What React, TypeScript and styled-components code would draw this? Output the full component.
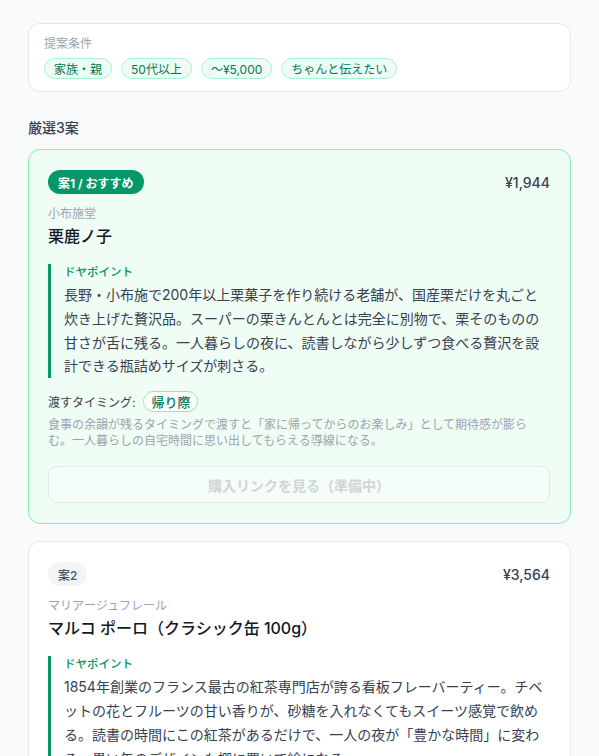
import React from 'react'
import styled, { createGlobalStyle } from 'styled-components'

const GlobalStyle = createGlobalStyle`
  * { box-sizing: border-box; }
  body {
    margin: 0;
    background: #f9fafb;
    font-family: Inter, "Noto Sans CJK JP", sans-serif;
    color: #111827;
  }
`

const Page = styled.div`
  padding: 23px 28px 40px;
`

const ConditionBox = styled.section`
  background: #ffffff;
  border: 1px solid #e5e7eb;
  border-radius: 12px;
  padding: 12px 15px 12px;
`

const SmallLabel = styled.div`
  font-size: 12px;
  line-height: 16px;
  color: #9ca3af;
`

const ChipRow = styled.div`
  display: flex;
  flex-wrap: wrap;
  gap: 9px;
  margin-top: 6px;
`

const Chip = styled.span`
  display: inline-flex;
  align-items: center;
  height: 21px;
  padding: 0 9px;
  border-radius: 999px;
  border: 1px solid #a7f3d0;
  background: #ecfdf5;
  color: #047857;
  font-size: 12px;
`

const SectionTitle = styled.h2`
  margin: 26px 0 11px;
  font-size: 14px;
  line-height: 20px;
  font-weight: 500;
  color: #374151;
`

const CardList = styled.div`
  display: flex;
  flex-direction: column;
  gap: 17px;
`

const Card = styled.article<{ $featured?: boolean }>`
  background: ${(p) => (p.$featured ? '#f0fdf4' : '#ffffff')};
  border: 1px solid ${(p) => (p.$featured ? '#86efac' : '#e5e7eb')};
  border-radius: 12px;
  padding: 20px 20px 20px 19px;
`

const CardHead = styled.div`
  display: flex;
  justify-content: space-between;
  align-items: center;
`

const Badge = styled.span<{ $featured?: boolean }>`
  display: inline-flex;
  align-items: center;
  height: 24px;
  padding: 0 10px;
  border-radius: 999px;
  font-size: 12px;
  font-weight: ${(p) => (p.$featured ? 700 : 500)};
  background: ${(p) => (p.$featured ? '#059669' : '#f3f4f6')};
  color: ${(p) => (p.$featured ? '#ffffff' : '#4b5563')};
`

const Price = styled.span`
  font-size: 14px;
  font-weight: 500;
  color: #374151;
`

const Shop = styled.div`
  margin-top: 12px;
  font-size: 12px;
  line-height: 16px;
  color: #9ca3af;
`

const Title = styled.h3`
  margin: 2px 0 0;
  font-size: 16px;
  line-height: 24px;
  font-weight: 500;
  color: #111827;
`

const Point = styled.div`
  margin-top: 16px;
  border-left: 3px solid #059669;
  padding-left: 13px;
`

const PointLabel = styled.div`
  font-size: 11.5px;
  line-height: 16px;
  font-weight: 500;
  color: #059669;
`

const PointText = styled.p`
  margin: 3px 0 0;
  font-size: 14px;
  line-height: 23.8px;
  color: #374151;
`

const TimingRow = styled.div`
  display: flex;
  align-items: center;
  gap: 8px;
  margin-top: 13px;
  font-size: 12px;
  color: #374151;
`

const TimingChip = styled.span`
  display: inline-flex;
  align-items: center;
  height: 21px;
  padding: 0 7px;
  border-radius: 999px;
  border: 1px solid #86efac;
  background: #ffffff;
  color: #047857;
  font-size: 13px;
  font-weight: 500;
`

const TimingNote = styled.p`
  margin: 5px 0 0;
  max-width: 488px;
  font-size: 12px;
  line-height: 16px;
  color: #9ca3af;
`

const BuyButton = styled.button`
  display: block;
  width: 100%;
  height: 37px;
  margin-top: 17px;
  border: 1px solid #e5e7eb;
  border-radius: 8px;
  background: rgba(255, 255, 255, 0.3);
  color: #d1d5db;
  font-family: inherit;
  font-size: 14px;
  font-weight: 600;
  cursor: not-allowed;
`

interface Plan {
  badge: string
  featured?: boolean
  price: string
  shop: string
  title: string
  point: string
  timing?: string
  timingNote?: string
}

const plans: Plan[] = [
  {
    badge: '案1 / おすすめ',
    featured: true,
    price: '¥1,944',
    shop: '小布施堂',
    title: '栗鹿ノ子',
    point:
      '長野・小布施で200年以上栗菓子を作り続ける老舗が、国産栗だけを丸ごと炊き上げた贅沢品。スーパーの栗きんとんとは完全に別物で、栗そのものの甘さが舌に残る。一人暮らしの夜に、読書しながら少しずつ食べる贅沢を設計できる瓶詰めサイズが刺さる。',
    timing: '帰り際',
    timingNote:
      '食事の余韻が残るタイミングで渡すと「家に帰ってからのお楽しみ」として期待感が膨らむ。一人暮らしの自宅時間に思い出してもらえる導線になる。',
  },
  {
    badge: '案2',
    price: '¥3,564',
    shop: 'マリアージュフレール',
    title: 'マルコ ポーロ（クラシック缶 100g）',
    point:
      '1854年創業のフランス最古の紅茶専門店が誇る看板フレーバーティー。チベットの花とフルーツの甘い香りが、砂糖を入れなくてもスイーツ感覚で飲める。読書の時間にこの紅茶があるだけで、一人の夜が「豊かな時間」に変わる。黒い缶のデザインも棚に置いて絵になる。',
    timing: '食後',
    timingNote: '食後のお茶の話題から自然に渡せる。',
  },
]

const conditions = ['家族・親', '50代以上', '〜¥5,000', 'ちゃんと伝えたい']

export default function App(): JSX.Element {
  return (
    <>
      <GlobalStyle />
      <Page>
        <ConditionBox>
          <SmallLabel>提案条件</SmallLabel>
          <ChipRow>
            {conditions.map((c) => (
              <Chip key={c}>{c}</Chip>
            ))}
          </ChipRow>
        </ConditionBox>

        <SectionTitle>厳選3案</SectionTitle>

        <CardList>
          {plans.map((plan) => (
            <Card key={plan.badge} $featured={plan.featured}>
              <CardHead>
                <Badge $featured={plan.featured}>{plan.badge}</Badge>
                <Price>{plan.price}</Price>
              </CardHead>
              <Shop>{plan.shop}</Shop>
              <Title>{plan.title}</Title>
              <Point>
                <PointLabel>ドヤポイント</PointLabel>
                <PointText>{plan.point}</PointText>
              </Point>
              {plan.timing ? (
                <>
                  <TimingRow>
                    渡すタイミング:
                    <TimingChip>{plan.timing}</TimingChip>
                  </TimingRow>
                  <TimingNote>{plan.timingNote}</TimingNote>
                </>
              ) : null}
              <BuyButton disabled>購入リンクを見る（準備中）</BuyButton>
            </Card>
          ))}
        </CardList>
      </Page>
    </>
  )
}
